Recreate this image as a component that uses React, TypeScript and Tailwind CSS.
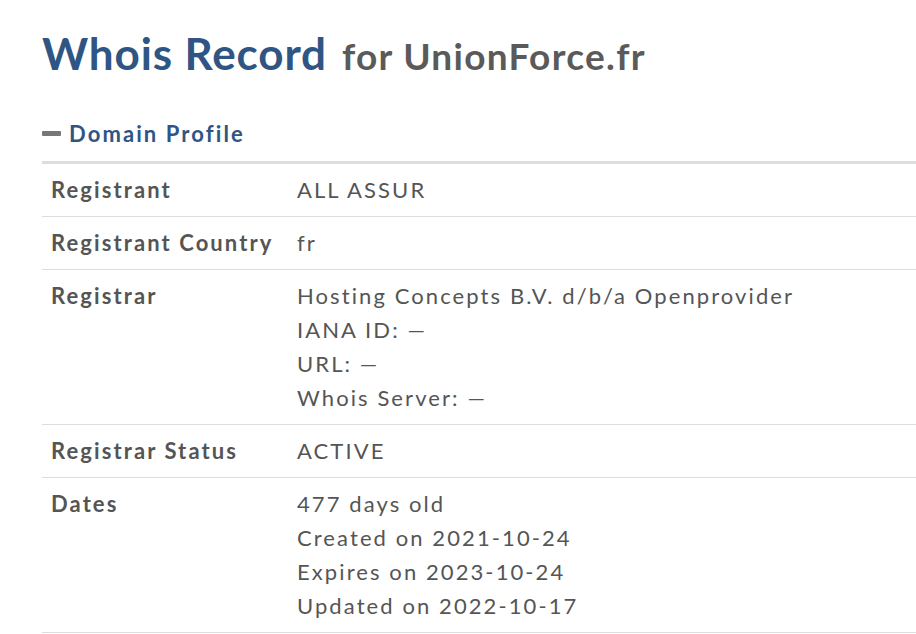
import React from 'react';

const rows: { label: string; lines: string[] }[] = [
  { label: 'Registrant', lines: ['ALL ASSUR'] },
  { label: 'Registrant Country', lines: ['fr'] },
  {
    label: 'Registrar',
    lines: ['Hosting Concepts B.V. d/b/a Openprovider', 'IANA ID: \u2014', 'URL: \u2014', 'Whois Server: \u2014'],
  },
  { label: 'Registrar Status', lines: ['ACTIVE'] },
  {
    label: 'Dates',
    lines: ['477 days old', 'Created on 2021-10-24', 'Expires on 2023-10-24', 'Updated on 2022-10-17'],
  },
];

export default function App() {
  return (
    <div className="min-h-screen bg-white pl-[42px] pt-[26px] font-['Lato',sans-serif] text-[#555]">
      <h1 className="flex items-baseline gap-[15px] leading-[54px]">
        <span className="text-[44px] font-bold tracking-[0.02em] text-[#2f5584]">Whois Record</span>
        <span className="text-[37px] font-bold tracking-[0.035em] text-[#5a5a5a]">for UnionForce.fr</span>
      </h1>

      <div className="mt-[34px] flex items-center gap-[8px] pb-[11px]">
        <span className="block h-[5px] w-[19px] rounded-[1px] bg-[#777]" />
        <span className="text-[22px] font-bold tracking-[0.095em] text-[#2f5584]">Domain Profile</span>
      </div>

      <div className="border-t-[3px] border-[#ddd]">
        {rows.map((r) => (
          <div key={r.label} className="flex border-b border-[#ddd] py-[9px] text-[22px] leading-[34px] tracking-[0.095em]">
            <div className="w-[246px] shrink-0 pl-[9px] font-bold">{r.label}</div>
            <div className="pl-[9px]">
              {r.lines.map((l) => (
                <div key={l}>{l}</div>
              ))}
            </div>
          </div>
        ))}
      </div>
    </div>
  );
}
